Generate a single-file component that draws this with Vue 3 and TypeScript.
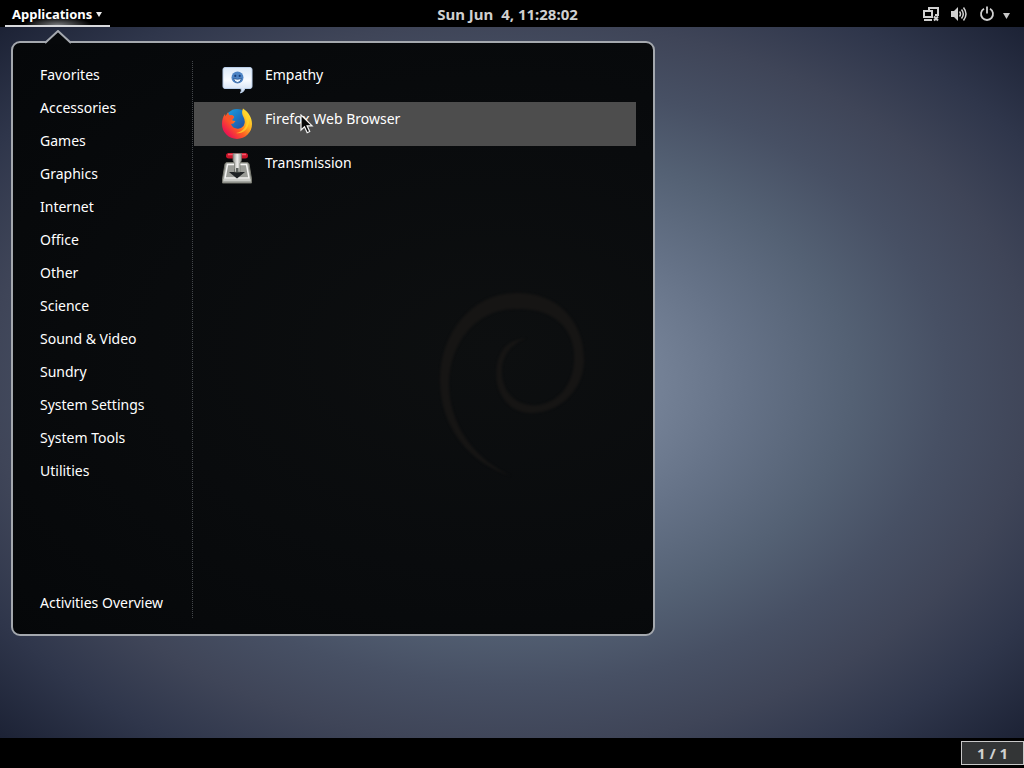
<script setup lang="ts">
import { ref } from 'vue'

interface AppEntry {
  name: string
  icon: 'empathy' | 'firefox' | 'transmission'
}

const categories: string[] = [
  'Favorites',
  'Accessories',
  'Games',
  'Graphics',
  'Internet',
  'Office',
  'Other',
  'Science',
  'Sound & Video',
  'Sundry',
  'System Settings',
  'System Tools',
  'Utilities',
]

const apps: AppEntry[] = [
  { name: 'Empathy', icon: 'empathy' },
  { name: 'Firefox Web Browser', icon: 'firefox' },
  { name: 'Transmission', icon: 'transmission' },
]

const selected = ref('Firefox Web Browser')
</script>

<template>
  <div class="screen">
    <header class="topbar">
      <div class="side">
        <button class="apps-button" type="button" aria-haspopup="true" aria-expanded="true">
          <span>Applications</span>
          <svg width="6" height="6" viewBox="0 0 6 6" aria-hidden="true"><path d="M0 1h6L3 6z" fill="#eee" /></svg>
        </button>
      </div>
      <button class="clock" type="button">Sun Jun&nbsp; 4, 11:28:02</button>
      <div class="side end">
        <button class="status" type="button" aria-label="System menu">
          <svg width="17" height="16" viewBox="0 0 17 16" fill="none" stroke="#d0d0d0" stroke-width="2" aria-hidden="true">
            <path d="M7 4V2h9v7h-3" />
            <path d="M2 5h8v6H2z" />
            <path d="M2 14h8" />
            <path d="M12 10.500l4 4M16 10.500l-4 4" />
          </svg>
          <svg width="16" height="16" viewBox="0 0 16 16" fill="none" stroke="#d0d0d0" stroke-width="1.500" aria-hidden="true">
            <path d="M0 5h3l4-4v14l-4-4H0z" fill="#d0d0d0" stroke="none" />
            <path d="M8.500 5.500q2 2.500 0 5M10.500 3.500q3.600 4.500 0 9M12.500 1.500q5 6.500 0 13" />
          </svg>
          <svg width="16" height="16" viewBox="0 0 16 16" fill="none" stroke="#d0d0d0" stroke-width="1.800" aria-hidden="true">
            <path d="M5 2.800a6 6 0 1 0 6 0M8 .500v7" />
          </svg>
          <svg class="caret" width="7" height="6" viewBox="0 0 7 6" aria-hidden="true"><path d="M0 0h7L3.500 6z" fill="#c8c8c8" /></svg>
        </button>
      </div>
    </header>

    <main class="desktop">
      <section class="menu" aria-label="Applications menu">
        <svg class="arrow" width="28" height="14" viewBox="0 0 28 14" aria-hidden="true">
          <path d="M1 14L14 1l13 13z" fill="#06080a" />
          <path d="M1 13L14 1l13 12" fill="none" stroke="#a4a8ae" stroke-width="2" />
        </svg>
        <svg class="swirl" width="150" height="186" viewBox="0 0 150 186" fill="#161514" aria-hidden="true">
          <path d="M72 184C30 171 1 135 1 88C1 39 35 1 77 1C118 0 146 29 145 70C144 99 119 122 91 121C67 120 54 98 58 73C61 56 70 48 87 46C70 53 62 66 63 81C64 103 80 115 99 113C121 110 134 91 135 69C137 38 116 16 78 17C39 16 11 49 10 91C10 132 34 166 72 184z" />
        </svg>
        <nav class="categories" aria-label="Categories">
          <button v-for="category in categories" :key="category" class="category" type="button">{{ category }}</button>
          <button class="category overview" type="button">Activities Overview</button>
        </nav>
        <ul class="apps">
          <li v-for="app in apps" :key="app.name">
            <button class="app" :class="{ active: app.name === selected }" type="button" @mouseenter="selected = app.name">
              <svg v-if="app.icon === 'empathy'" class="icon" viewBox="0 0 32 32" aria-hidden="true">
                <defs>
                  <linearGradient id="bubble" x1="0" y1="0" x2="0" y2="1">
                    <stop offset="0" stop-color="#dce9f8" />
                    <stop offset=".5" stop-color="#f8fbff" />
                    <stop offset="1" stop-color="#cbdcf2" />
                  </linearGradient>
                </defs>
                <path d="M3 3.500h25q2 0 2 2v17q0 2-2 2h-5q-1 3.500-4.500 4.500q1.500-2 .5-4.500h-16q-2 0-2-2v-17q0-2 2-2z" fill="url(#bubble)" stroke="#bacee8" />
                <circle cx="15.500" cy="13.500" r="6" fill="#4c83c4" />
                <circle cx="13.300" cy="11.900" r="1.100" fill="#173d78" />
                <circle cx="17.700" cy="11.900" r="1.100" fill="#173d78" />
                <path d="M11.500 14.500q4 1.500 8 0q-1 4-4 4t-4-4z" fill="#e9f4ff" stroke="#24508c" stroke-width=".8" />
              </svg>
              <svg v-else-if="app.icon === 'firefox'" class="icon" viewBox="1 1 32 32" aria-hidden="true">
                <defs>
                  <linearGradient id="flame" x1=".9" y1=".1" x2=".15" y2=".8">
                    <stop offset="0" stop-color="#ffe835" />
                    <stop offset=".35" stop-color="#ffb020" />
                    <stop offset=".65" stop-color="#ff5a24" />
                    <stop offset="1" stop-color="#ed174f" />
                  </linearGradient>
                  <linearGradient id="globe" x1="0" y1="0" x2="1" y2="1">
                    <stop offset="0" stop-color="#16a4e8" />
                    <stop offset="1" stop-color="#263c91" />
                  </linearGradient>
                </defs>
                <circle cx="16" cy="13.500" r="11.500" fill="url(#globe)" />
                <path d="M22 1.500C27.500 5 31 10.500 31 17A15 15 0 0 1 1 17C1 13 2 9.500 4 7L4.500 9.500L7 5.500L8 8.500Q11 7.500 13 9.500Q12.500 12 10.500 13Q12 14 14.500 14L12.500 16.500L10 17Q11.500 21 15.500 21.500Q19.500 22.500 22.500 19Q25 14.500 22.500 10Q20 6 22 1.500z" fill="url(#flame)" />
                <path d="M23 3C28 8 29.500 14 27 19C25 24 20.500 27 15 26C21.500 25 26.500 20 25.500 13Q25 9 22.500 6z" fill="#ffd52b" opacity=".75" />
                <path d="M4 7L4.500 9.500L7 5.500L8 8.500Q11 7.500 13 9.500Q12.500 12 10.500 13L8 15Q4 13 4 7z" fill="#f8542a" />
              </svg>
              <svg v-else class="icon" viewBox="1 0 32 32" aria-hidden="true">
                <defs>
                  <linearGradient id="metal" x1="0" y1="0" x2="1" y2="0">
                    <stop offset="0" stop-color="#8b8d87" />
                    <stop offset=".5" stop-color="#eeeeec" />
                    <stop offset="1" stop-color="#94968f" />
                  </linearGradient>
                </defs>
                <path d="M6 10.500h20q1.500 0 2 1.500l2.500 15v4h-29v-4l2.500-15q.5-1.500 2-1.500z" fill="#a5a7a2" stroke="#777970" />
                <path d="M6.500 12.500h19l2.500 13.500h-24z" fill="#9a9c97" stroke="#f4f4f2" stroke-width="1.500" />
                <path d="M2.500 28h27" stroke="#d8dad5" stroke-width="1.500" />
                <path d="M13 17h6v3h5l-8 6.500L8 20h5z" fill="#1e2224" />
                <rect x="5" y="1" width="22" height="5.500" rx="2.700" fill="#c9152a" />
                <path d="M7 2.500h18" stroke="#f5586b" stroke-width="1.500" />
                <path d="M12 1.500h8.500v7l-1.500 3v8.500h-5.500v-8.500l-1.500-3z" fill="url(#metal)" stroke="#74766e" stroke-width=".7" />
                <path d="M15 16h2.500v4h-2.500z" fill="#5d625e" />
              </svg>
              <span class="app-name">{{ app.name }}</span>
              <svg v-if="app.name === 'Firefox Web Browser'" class="pointer" width="14" height="20" viewBox="0 0 14 20" aria-hidden="true">
                <path d="M1 1v15l3.500-3.300 2.700 6 2.500-1.200-2.600-5.700h5z" fill="#080808" stroke="#f4f4f4" stroke-width="1.200" />
              </svg>
            </button>
          </li>
        </ul>
      </section>
    </main>

    <footer class="bottombar">
      <button class="workspace" type="button" aria-label="Workspace 1 of 1">1 / 1</button>
    </footer>
  </div>
</template>

<style>
html,
body {
  margin: 0;
  background: #000;
}
</style>

<style scoped>
.screen {
  display: flex;
  flex-direction: column;
  min-height: 100vh;
  background: #000;
  color: #fff;
  font-family: "Noto Sans", "Open Sans", sans-serif;
  font-size: 14px;
  line-height: 20px;
}

button {
  margin: 0;
  padding: 0;
  border: 0;
  background: none;
  color: inherit;
  font: inherit;
  text-align: left;
  cursor: default;
}

.topbar {
  display: flex;
  height: 27px;
  font-weight: 700;
}

.side {
  display: flex;
  flex: 1;
  padding-left: 5px;
}

.end {
  justify-content: flex-end;
  padding: 0 14px 0 0;
}

.apps-button {
  display: flex;
  align-items: center;
  gap: 4px;
  box-sizing: border-box;
  padding: 2px 8px 0 7px;
  border-bottom: 2px solid #d8d9dc;
  background: radial-gradient(ellipse 34px 8px at 50% 100%, #77797c, transparent);
  font-size: 13px;
}

.clock {
  color: #d0d0d0;
  font-size: 15px;
}

.status {
  display: flex;
  align-items: center;
  gap: 12px;
}

.caret {
  margin: 4px 0 0 -4px;
}

.desktop {
  position: relative;
  display: flex;
  flex: 1;
  align-items: flex-start;
  padding: 14px 11px 60px;
  background: radial-gradient(ellipse farthest-corner at 50% 50%, #8290a4 0%, #748196 20%, #657287 32%, #546174 47%, #475064 60%, #3f4558 72%, #2f364b 85%, #1c2235 100%);
}

.menu {
  position: relative;
  display: flex;
  box-sizing: border-box;
  width: 644px;
  max-width: 100%;
  padding: 15px 17px 13px 0;
  border: 2px solid #a4a8ae;
  border-radius: 9px;
  background: radial-gradient(ellipse at 75% 52%, #0d0f10, #090b0d 50%, #050709 100%);
}

.arrow {
  position: absolute;
  top: -13px;
  left: 31px;
}

.swirl {
  position: absolute;
  top: 249px;
  left: 426px;
  filter: blur(1px);
}

.categories {
  display: flex;
  flex: none;
  flex-direction: column;
  box-sizing: border-box;
  width: 180px;
  margin: 3px 0;
  border-right: 1px dotted #44474b;
}

.category {
  height: 33px;
  padding: 0 0 6px 27px;
}

.overview {
  height: 29px;
  margin-top: 99px;
  padding-bottom: 2px;
}

.apps {
  flex: 1;
  margin: 0;
  padding: 0 0 0 1px;
  list-style: none;
}

.app {
  position: relative;
  display: flex;
  align-items: center;
  gap: 11px;
  width: 100%;
  height: 44px;
  padding-left: 28px;
}

.app.active {
  background: #4d4d4d;
}

.icon {
  width: 32px;
  height: 32px;
}

.app-name {
  padding-bottom: 10px;
}

.pointer {
  position: absolute;
  top: 12px;
  left: 106px;
}

.workspace {
  box-sizing: border-box;
  width: 63px;
  height: 24px;
  border: 1px solid #c8c8c8;
  background: #333536;
  color: #d0d0d0;
  font-size: 15px;
  font-weight: 700;
  text-align: center;
}

.bottombar {
  display: flex;
  align-items: center;
  justify-content: flex-end;
  height: 30px;
}
</style>
